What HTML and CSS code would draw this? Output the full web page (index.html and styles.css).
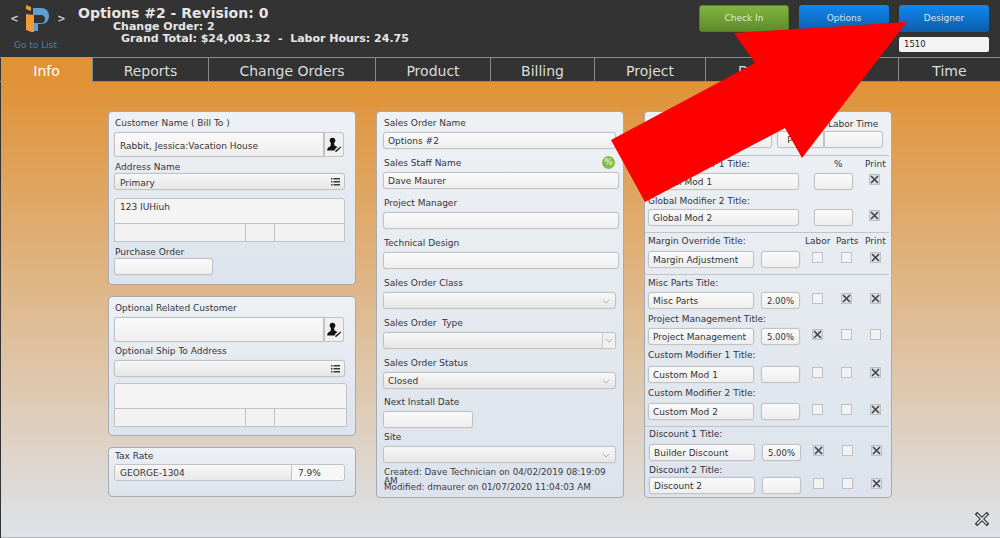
FILE: index.html
```html
<!DOCTYPE html>
<html lang="en">
<head>
<meta charset="utf-8">
<title>Options #2</title>
<link rel="stylesheet" href="styles.css">
</head>
<body>
<svg class="defs" width="0" height="0">
  <symbol id="x" viewBox="0 0 11 11"><path d="M2 2l7 7M9 2l-7 7" stroke="#3a3f4c" stroke-width="1.500" fill="none"/></symbol>
  <symbol id="person" viewBox="0 0 16 16"><circle cx="6.500" cy="3.600" r="2.800" fill="#111"/><path d="M5 6h3l.5 2.500 3 1.500-2 1.500-1 2H1.200c0-2.500 1-3.200 3.300-4.200z" fill="#111"/><path d="M9.500 13.500l5-4 .8.800-4.600 4.400-1.600.4z" fill="#222"/></symbol>
  <symbol id="list" viewBox="0 0 9 8"><path d="M0 0h1.500v1.500H0zM2.500 0H9v1.500H2.500zM0 3h1.500v1.500H0zM2.500 3H9v1.500H2.500zM0 6h1.500v1.500H0zM2.500 6H9v1.500H2.500z" fill="#3a3a3a"/></symbol>
  <symbol id="chev" viewBox="0 0 8 5"><path d="M1 1l3 3 3-3" stroke="#a9adb3" fill="none"/></symbol>
</svg>
<div class="app">
  <header class="top">
    <div class="brand">
      <div class="brand-row">
        <span class="nav">&lt;</span>
        <svg class="logo" viewBox="0 0 26 28" width="26" height="28">
          <path d="M1 1l5 2v4l-5-2z" fill="#f0993a"/>
          <path d="M1 10l8 1v18l-8-3z" fill="#f0993a"/>
          <path d="M8 4h8c5 0 8 3.500 8 8s-3 8-8 8h-3v7H9v-8h7c2.500 0 4-1.500 4-4s-1.500-4-4-4H8z" fill="#5d9fd2"/>
        </svg>
        <span class="nav">&gt;</span>
      </div>
      <div class="golist">Go to List</div>
    </div>
    <div class="heading">
      <div class="h-title">Options #2 - Revision: 0</div>
      <div class="h-co">Change Order: 2</div>
      <div class="h-total">Grand Total: $24,003.32 &nbsp;-&nbsp; Labor Hours: 24.75</div>
    </div>
    <div class="actions">
      <div class="btn green">Check In</div>
      <div class="btn blue">Options</div>
      <div class="btn-col">
        <div class="btn blue">Designer</div>
        <div class="search">1510</div>
      </div>
    </div>
  </header>

  <nav class="tabs">
    <div class="tab active">Info</div>
    <div class="tab">Reports</div>
    <div class="tab">Change Orders</div>
    <div class="tab">Product</div>
    <div class="tab">Billing</div>
    <div class="tab">Project</div>
    <div class="tab tab-doc">Documents</div>
    <div class="tab">Time</div>
  </nav>

  <main class="content">
    <div class="col">
      <section class="panel p-bill">
        <div class="lbl">Customer Name ( Bill To )</div>
        <div class="pick">
          <div class="field tall">Rabbit, Jessica:Vacation House</div>
          <div class="pick-btn"><svg width="16" height="16"><use href="#person"/></svg></div>
        </div>
        <div class="lbl after-pick">Address Name</div>
        <div class="field sel">Primary<svg class="sel-ic" width="9" height="8"><use href="#list"/></svg></div>
        <div class="addr">
          <div class="addr-main">123 IUHiuh</div>
          <div class="addr-row"><div class="cell c-city"></div><div class="cell c-st"></div><div class="cell c-zip"></div></div>
        </div>
        <div class="lbl after-addr">Purchase Order</div>
        <div class="field w-po"></div>
      </section>

      <section class="panel p-ship">
        <div class="lbl">Optional Related Customer</div>
        <div class="pick">
          <div class="field tall"></div>
          <div class="pick-btn"><svg width="16" height="16"><use href="#person"/></svg></div>
        </div>
        <div class="lbl after-pick-ship">Optional Ship To Address</div>
        <div class="field sel sel-ship"><svg class="sel-ic" width="9" height="8"><use href="#list"/></svg></div>
        <div class="addr wide">
          <div class="addr-main"></div>
          <div class="addr-row"><div class="cell c-city"></div><div class="cell c-st"></div><div class="cell c-zip"></div></div>
        </div>
      </section>

      <section class="panel p-tax">
        <div class="lbl">Tax Rate</div>
        <div class="tax"><div class="tax-name">GEORGE-1304</div><div class="tax-rate">7.9%</div></div>
      </section>
    </div>

    <div class="col">
      <section class="panel p-order">
        <div class="grp"><div class="lbl">Sales Order Name</div><div class="field w-a">Options #2</div></div>
        <div class="grp">
          <div class="lbl lbl-badge">Sales Staff Name<span class="badge">%</span></div>
          <div class="field w-b">Dave Maurer</div>
        </div>
        <div class="grp"><div class="lbl">Project Manager</div><div class="field w-b"></div></div>
        <div class="grp"><div class="lbl">Technical Design</div><div class="field w-b"></div></div>
        <div class="grp"><div class="lbl">Sales Order Class</div><div class="field w-a sel"><svg class="sel-ic chev" width="8" height="5"><use href="#chev"/></svg></div></div>
        <div class="grp"><div class="lbl">Sales Order &nbsp;Type</div><div class="field w-a sel split"><span class="split-btn"><svg width="8" height="5"><use href="#chev"/></svg></span></div></div>
        <div class="grp"><div class="lbl">Sales Order Status</div><div class="field w-a sel">Closed<svg class="sel-ic chev" width="8" height="5"><use href="#chev"/></svg></div></div>
        <div class="grp g-date"><div class="lbl">Next Install Date</div><div class="field w-date"></div></div>
        <div class="grp g-site"><div class="lbl">Site</div><div class="field w-a sel"><svg class="sel-ic chev" width="8" height="5"><use href="#chev"/></svg></div></div>
        <div class="audit">
          <div>Created: Dave Technician on 04/02/2019 08:19:09 AM</div>
          <div class="audit-mod">Modified: dmaurer on 01/07/2020 11:04:03 AM</div>
        </div>
      </section>
    </div>

    <div class="col">
      <section class="panel p-mods">
        <div class="head-row"><span class="ht-labor">Labor Time</span></div>
        <div class="top-row">
          <div class="field w-top1"></div>
          <div class="field w-top2">Prices</div>
          <div class="field w-top3"></div>
        </div>
        <hr class="rule r-first">
        <div class="title-row"><span class="t-name">Global Modifier 1 Title:</span><span class="ct-pct">%</span><span class="ct-print">Print</span></div>
        <div class="mod wide t1"><div class="field m-name">Global Mod 1</div><div class="field m-pct"></div><span class="chk on"><svg width="11" height="11"><use href="#x"/></svg></span></div>
        <div class="title-row s-g2"><span class="t-name">Global Modifier 2 Title:</span></div>
        <div class="mod wide t0"><div class="field m-name">Global Mod 2</div><div class="field m-pct"></div><span class="chk on"><svg width="11" height="11"><use href="#x"/></svg></span></div>
        <hr class="rule">
        <div class="title-row three"><span class="t-name">Margin Override Title:</span><span class="c3 c-l">Labor</span><span class="c3 c-p">Parts</span><span class="c3 c-r">Print</span></div>
        <div class="mod t2"><div class="field m-name">Margin Adjustment</div><div class="field m-pct"></div><div class="chks"><span class="chk"></span><span class="chk"></span><span class="chk on"><svg width="11" height="11"><use href="#x"/></svg></span></div></div>
        <hr class="rule">
        <div class="title-row"><span class="t-name">Misc Parts Title:</span></div>
        <div class="mod t1"><div class="field m-name">Misc Parts</div><div class="field m-pct">2.00%</div><div class="chks"><span class="chk"></span><span class="chk on"><svg width="11" height="11"><use href="#x"/></svg></span><span class="chk on"><svg width="11" height="11"><use href="#x"/></svg></span></div></div>
        <div class="title-row s-pm"><span class="t-name">Project Management Title:</span></div>
        <div class="mod t1"><div class="field m-name">Project Management</div><div class="field m-pct">5.00%</div><div class="chks"><span class="chk on"><svg width="11" height="11"><use href="#x"/></svg></span><span class="chk"></span><span class="chk"></span></div></div>
        <div class="title-row s-c1"><span class="t-name">Custom Modifier 1 Title:</span></div>
        <div class="mod t3"><div class="field m-name">Custom Mod 1</div><div class="field m-pct"></div><div class="chks"><span class="chk"></span><span class="chk"></span><span class="chk on"><svg width="11" height="11"><use href="#x"/></svg></span></div></div>
        <div class="title-row s-c2"><span class="t-name">Custom Modifier 2 Title:</span></div>
        <div class="mod t2"><div class="field m-name">Custom Mod 2</div><div class="field m-pct"></div><div class="chks"><span class="chk"></span><span class="chk"></span><span class="chk on"><svg width="11" height="11"><use href="#x"/></svg></span></div></div>
        <hr class="rule r-disc">
        <div class="disc">
          <div class="title-row"><span class="t-name">Discount 1 Title:</span></div>
          <div class="mod t2"><div class="field m-name">Builder Discount</div><div class="field m-pct">5.00%</div><div class="chks"><span class="chk on"><svg width="11" height="11"><use href="#x"/></svg></span><span class="chk"></span><span class="chk on"><svg width="11" height="11"><use href="#x"/></svg></span></div></div>
          <div class="title-row s-d2"><span class="t-name">Discount 2 Title:</span></div>
          <div class="mod t-last"><div class="field m-name">Discount 2</div><div class="field m-pct"></div><div class="chks"><span class="chk"></span><span class="chk"></span><span class="chk on"><svg width="11" height="11"><use href="#x"/></svg></span></div></div>
        </div>
      </section>
    </div>

    <svg class="close" viewBox="0 0 18 18" width="18" height="18">
      <path d="M3 3l12 12M15 3L3 15" stroke="#2c2c2c" stroke-width="3.600" fill="none"/>
      <path d="M4 4l10 10M14 4L4 14" stroke="#dfe3e8" stroke-width="1.600" fill="none"/>
    </svg>
  </main>

  <svg class="arrow" viewBox="0 0 1000 538" width="1000" height="538">
    <polygon points="907,22 734,33 755,63 611,140 645,202 785,128 802,158" fill="#ff0000"/>
  </svg>
</div>
</body>
</html>
```

FILE: styles.css
```css
* { box-sizing: border-box; }
html, body { margin: 0; padding: 0; }
body { width: 1000px; height: 538px; overflow: hidden; font-family: "DejaVu Sans", Verdana, sans-serif; }
.defs { position: absolute; }
.app { position: relative; width: 1000px; height: 538px; overflow: hidden; display: flex; flex-direction: column; background: #333; }

/* header */
.top { height: 57px; flex: none; display: flex; color: #e6e6e6; background: #333; }
.brand { width: 78px; flex: none; padding: 3px 0 0 9px; }
.brand-row { display: flex; align-items: center; height: 30px; }
.nav { width: 11px; font-size: 10px; font-weight: bold; color: #c9ccce; text-align: center; }
.logo { margin: 0 5px; flex: none; }
.golist { margin: 7px 0 0 5px; font-size: 9px; line-height: 11px; color: #4f7fa8; }
.heading { flex: none; padding-top: 5px; font-weight: bold; }
.h-title { font-size: 14px; line-height: 16px; }
.h-co { font-size: 11px; line-height: 12px; padding-left: 35px; }
.h-total { font-size: 11px; line-height: 12px; padding-left: 43px; white-space: nowrap; }
.actions { margin-left: auto; display: flex; gap: 10px; padding: 5px 11px 0 0; align-items: flex-start; }
.btn { width: 90px; height: 27px; border-radius: 3px; font-size: 9px; line-height: 27px; text-align: center; color: #d9e6ef; }
.green { background: linear-gradient(#82b540, #5f8a2c); color: #dfeccd; border: 1px solid #557f27; line-height: 25px; }
.blue { background: linear-gradient(#1088f2, #0b5da6); }
.btn-col { display: flex; flex-direction: column; gap: 5px; }
.search { width: 90px; height: 15px; border-radius: 2px; background: #f3f3f3; color: #222; font-size: 8.500px; line-height: 15px; padding-left: 5px; }

/* tabs */
.tabs { height: 25px; flex: none; display: grid; grid-template-columns: 91px 116px 167px 115px 104px 111px 193px 102px; grid-template-rows: 23px; border-top: 1px solid #8a8a8a; border-bottom: 1px solid #8a8a8a; background: #333; padding-left: 1px; }
.tab { font-size: 14px; line-height: 26px; height: 23px; color: #dcdcdc; text-align: center; border-left: 1px solid #8a8a8a; white-space: nowrap; }
.tab:first-child { border-left: 0; }
.tab.active { background: #e09236; color: #fff; margin: -1px 0; height: 25px; line-height: 28px; }
.tab-doc { text-align: left; padding-left: 32px; }

/* content */
.content { flex: 1; position: relative; display: flex; gap: 20px; padding: 29px 0 0 107px; margin-left: 1px; background: linear-gradient(#e09236, #dde3ea); border-bottom: 1px solid #b4b6b8; }
.col { width: 248px; flex: none; display: flex; flex-direction: column; gap: 11px; }
.panel { width: 248px; border: 1px solid #a6abb2; border-radius: 4px; background: linear-gradient(#eef1f4, #dce3ec); padding: 5px 0 0 5px; }
.p-bill { height: 174px; }
.p-ship { height: 140px; }
.p-tax { height: 50px; padding-top: 2px; }
.p-order, .p-mods { height: 387px; }
.p-order { padding-left: 6px; }
.lbl { font-size: 9px; line-height: 12px; color: #34343c; padding-left: 1px; white-space: nowrap; }

.field { height: 17px; border: 1px solid #c0c3c5; box-shadow: 0 0 1px #b4b7ba; border-radius: 3px; background: linear-gradient(#fafafa, #eeeeee); font-size: 9px; line-height: 17px; color: #333; padding-left: 4px; white-space: nowrap; overflow: hidden; }
.p-bill .field { padding-left: 5px; }
.p-bill .sel { line-height: 19px; }

/* left column */
.pick { display: flex; width: 230px; margin-top: 3px; }
.pick .field.tall { flex: 1; height: 25px; line-height: 26px; border-radius: 3px 0 0 3px; border-right-width: 2px; }
.pick-btn { width: 19px; height: 25px; border: 1px solid #c2c4c6; border-left: 0; border-radius: 0 3px 3px 0; background: #f0f0f0; display: flex; align-items: center; justify-content: center; }
.after-pick { margin-top: 4px; }
.after-pick-ship { margin-top: 3px; }
.sel { position: relative; width: 231px; background: linear-gradient(#f7f7f7, #e6e6e6); }
.sel-ship { margin-top: 3px; }
.sel-ic { position: absolute; right: 4px; top: 4px; }
.sel-ic.chev { right: 5px; top: 6px; }
.addr { width: 231px; margin-top: 8px; }
.addr.wide { width: 233px; margin-top: 6px; }
.addr-main { height: 26px; border: 1px solid #c0c3c5; border-radius: 3px 3px 0 0; background: #f4f4f4; font-size: 9px; line-height: 17px; padding-left: 5px; color: #333; }
.addr-row { display: flex; height: 18px; }
.cell { height: 18px; border: 1px solid #c0c3c5; border-top: 0; background: #f2f2f2; }
.c-city { width: 132px; }
.c-st { width: 29px; border-left: 0; }
.c-zip { flex: 1; border-left: 0; }
.after-addr { margin-top: 4px; }
.w-po { width: 99px; }
.tax { display: flex; width: 231px; height: 17px; margin-top: 2px; border: 1px solid #c0c3c5; border-radius: 3px; font-size: 9px; line-height: 17px; color: #333; overflow: hidden; }
.tax-name { width: 177px; padding-left: 5px; background: linear-gradient(#f7f7f7, #e8e8e8); border-right: 1px solid #c4c4c4; }
.tax-rate { flex: 1; padding-left: 6px; background: #f7f7f7; }

/* middle column */
.grp { margin-bottom: 8px; }
.grp .field { margin-top: 3px; }
.g-date { margin-bottom: 3px; margin-top: -1px; }
.g-site { margin-bottom: 5px; }
.lbl-badge { position: relative; }
.badge { position: absolute; left: 219px; top: -1px; width: 13px; height: 13px; border-radius: 50%; background: #83bb4d; color: #dff0cc; font-size: 8px; line-height: 13px; text-align: center; font-weight: bold; }
.w-a { width: 233px; }
.w-b { width: 236px; }
.w-date { width: 90px; }
.split-btn { position: absolute; right: 0; top: 0; width: 13px; height: 15px; border-left: 1px solid #c8c8c8; background: #f0f0f0; display: flex; align-items: center; justify-content: center; }
.audit { font-size: 8.800px; line-height: 9px; color: #3a3a42; padding-left: 1px; width: 236px; }
.audit-mod { margin-top: -3px; }

/* right column */
.p-mods { padding: 0 0 0 3px; }
.head-row { height: 19px; position: relative; }
.ht-labor { position: absolute; left: 180px; top: 6px; font-size: 9px; line-height: 12px; color: #34343c; }
.top-row { display: flex; }
.w-top1 { width: 124px; margin-right: 5px; }
.w-top2 { width: 47px; text-align: center; padding: 0; border-radius: 3px 0 0 3px; }
.w-top3 { width: 59px; border-radius: 0 3px 3px 0; }
.rule { margin: 6px 0 2px -3px; height: 1px; border: 0; background: #c0c4ca; width: 244px; }
.r-first { margin-top: 7px; }
.title-row { position: relative; height: 12px; font-size: 9px; line-height: 12px; color: #34343c; white-space: nowrap; }
.ct-pct { position: absolute; left: 186px; }
.ct-print { position: absolute; left: 217px; }
.c3 { position: absolute; }
.c-l { left: 157px; }
.c-p { left: 188px; }
.c-r { left: 217px; }
.mod { display: flex; align-items: flex-start; }
.t0 { margin-top: 2px; }
.t1 { margin-top: 3px; }
.t2 { margin-top: 4px; }
.t3 { margin-top: 5px; }
.t-last { margin-top: 1px; }
.mod .m-name { width: 106px; margin-right: 7px; }
.mod .m-pct { width: 39px; padding-left: 0; text-align: center; font-size: 8.500px; }
.mod.wide .m-name { width: 151px; margin-right: 15px; }
.mod.wide .chk { margin-left: 16px; }
.chks { margin-left: 12px; display: flex; gap: 18px; }
.chk { display: block; width: 11px; height: 11px; margin-top: 1px; background: #f2f2f2; border: 1px solid #bec0c4; flex: none; position: relative; }
.chk svg { position: absolute; left: -1px; top: -1px; }
.chk.on { background: #dcdcdc; }
.s-g2 { margin-top: 5px; }
.r-disc { margin-bottom: 1px; }
.s-pm { margin-top: 4px; }
.s-c1 { margin-top: 4px; }
.s-c2 { margin-top: 4px; }
.disc { padding-left: 1px; }
.s-d2 { margin-top: 3px; }

/* overlays */
.close { position: absolute; right: 9px; bottom: 9px; }
.arrow { position: absolute; left: 0; top: 0; pointer-events: none; }
```
